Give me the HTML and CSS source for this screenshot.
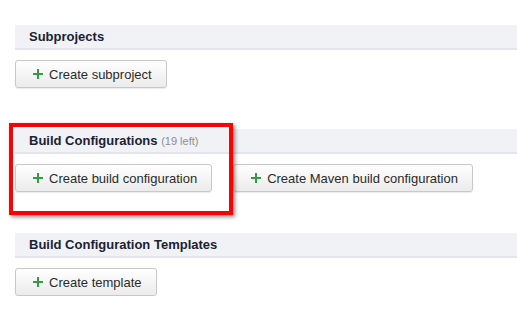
FILE: index.html
```html
<!DOCTYPE html>
<html lang="en">
  <head>
    <meta charset="UTF-8" />
    <meta name="viewport" content="width=device-width, initial-scale=1.0" />
    <title>Project settings</title>
    <link rel="stylesheet" href="styles.css">
  </head>
  <body>
    <div class="page">
      <div class="section">
        <h2 class="sectionTitle">Subprojects</h2>
        <div class="actions">
          <button type="button" class="btn"><span class="plus"></span>Create subproject</button>
        </div>
      </div>

      <div class="section">
        <h2 class="sectionTitle">Build Configurations <span class="hint">(19 left)</span></h2>
        <div class="actions">
          <button type="button" class="btn"><span class="plus"></span>Create build configuration</button>
          <button type="button" class="btn"><span class="plus"></span>Create Maven build configuration</button>
        </div>
      </div>

      <div class="section">
        <h2 class="sectionTitle">Build Configuration Templates</h2>
        <div class="actions">
          <button type="button" class="btn"><span class="plus"></span>Create template</button>
        </div>
      </div>

      <div class="highlight"></div>
    </div>
  </body>
</html>
```

FILE: styles.css
```css
body {
  margin: 0;
  background: #fff;
  font-family: Arial, "Liberation Sans", sans-serif;
  font-size: 13px;
  color: #333;
}
.page {
  position: relative;
  padding: 25px 0 0 15px;
}
.section + .section {
  margin-top: 41px;
}
.sectionTitle {
  margin: 0;
  height: 23px;
  line-height: 23px;
  padding-left: 14px;
  background: #f1f2f6;
  border-bottom: 2px solid #e4e5eb;
  font-size: 13px;
  font-weight: bold;
  color: #1c2130;
}
.hint {
  font-size: 11px;
  font-weight: normal;
  color: #8a8d94;
}
.actions {
  display: flex;
  gap: 21px;
  margin-top: 10px;
}
.btn {
  display: flex;
  align-items: center;
  height: 28px;
  padding: 0 14px 0 17px;
  font-family: Arial, "Liberation Sans", sans-serif;
  font-size: 13px;
  color: #2b2b2b;
  background: linear-gradient(#ffffff, #ebebeb);
  border: 1px solid #c8c8c8;
  border-radius: 3px;
  box-shadow: 0 1px 1px rgba(0, 0, 0, 0.08);
}
.plus {
  position: relative;
  width: 10px;
  height: 10px;
  margin-right: 6px;
}
.plus::before,
.plus::after {
  content: "";
  position: absolute;
  background: #2ea043;
}
.plus::before {
  left: 0;
  top: 4px;
  width: 10px;
  height: 2px;
}
.plus::after {
  left: 4px;
  top: 0;
  width: 2px;
  height: 10px;
}
.highlight {
  position: absolute;
  left: 9px;
  top: 123px;
  width: 216px;
  height: 84px;
  border: 4px solid #ff0000;
  box-shadow: 2px 2px 4px rgba(0, 0, 0, 0.45);
}
```
